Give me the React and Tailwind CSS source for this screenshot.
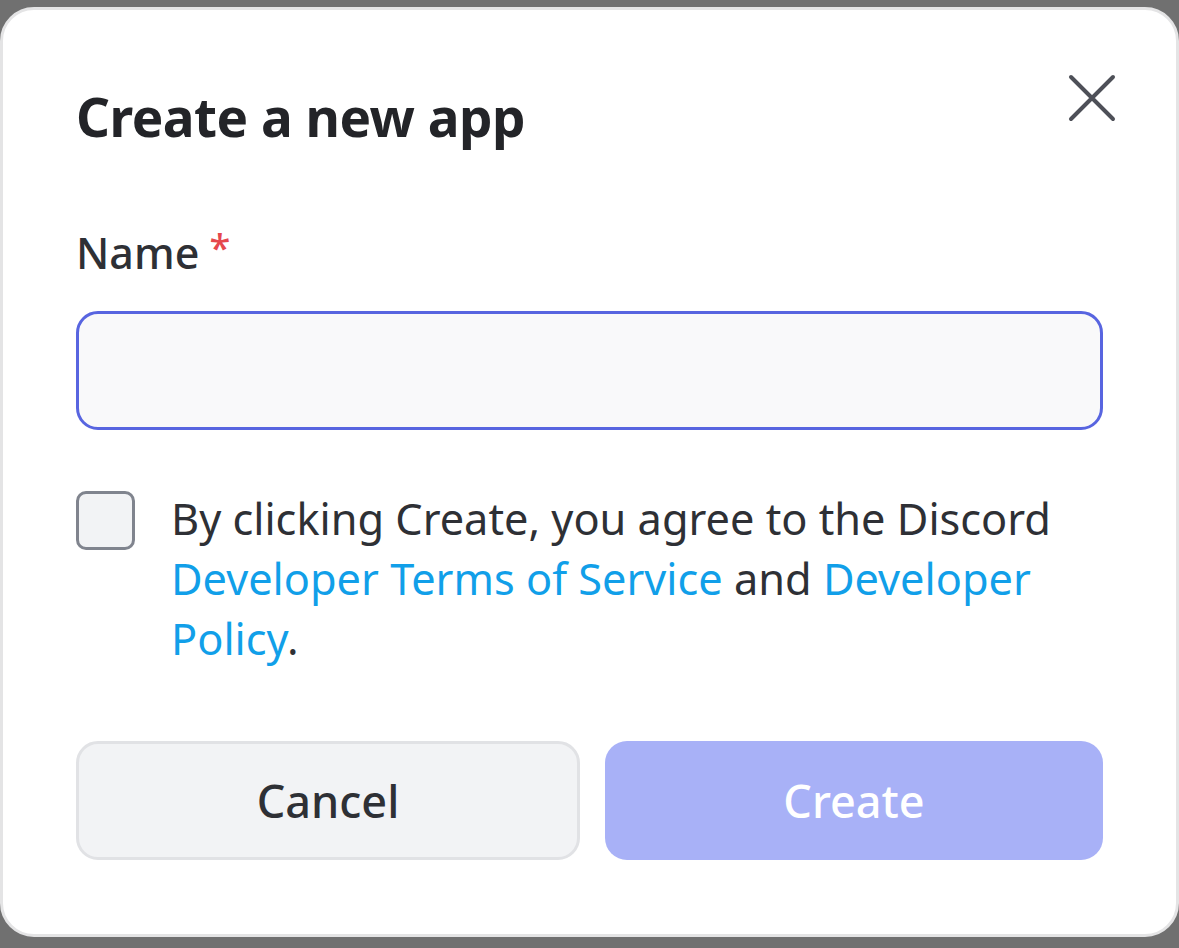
import React, { useState } from "react";

const font = { fontFamily: '"Noto Sans", "Open Sans", sans-serif' };

// Close icon drawn to match the thin rounded X
const CloseIcon = () => (
  <svg width="48" height="48" viewBox="0 0 48 48" fill="none">
    <path d="M3 3 L45 45 M45 3 L3 45" stroke="#4e5058" strokeWidth="4" strokeLinecap="round" />
  </svg>
);

const App = () => {
  const [name, setName] = useState("");
  const [agreed, setAgreed] = useState(false);

  return (
    <div className="w-[1179px] h-[948px] bg-[#707070] pt-[7px] overflow-hidden" style={font}>
      <div className="h-[930px] rounded-[34px] border-[3px] border-[#e4e4e5] bg-white pl-[73px] pr-[73px]">
        {/* Header */}
        <div className="flex items-start justify-between pt-[67px]">
          <h1 className="text-[53px] leading-[80px] font-bold text-[#232428] tracking-[-0.5px]">
            Create a new app
          </h1>
          <button className="mt-[-3px] mr-[-13px] p-0">
            <CloseIcon />
          </button>
        </div>

        {/* Name field */}
        <label className="block mt-[66px] text-[43px] leading-[60px] font-medium text-[#2e3035]">
          Name<span className="text-[#e5484d] text-[38px] align-top ml-[10px] relative top-[-6px]">*</span>
        </label>
        <input
          value={name}
          onChange={(e) => setName(e.target.value)}
          className="mt-[28px] block w-full h-[119px] rounded-[22px] border-[3px] border-[#5865e0] bg-[#f9f9fa] px-6 text-[44px] outline-none"
        />

        {/* Terms */}
        <div className="flex items-start mt-[61px]">
          <button
            onClick={() => setAgreed(!agreed)}
            className={`shrink-0 w-[59px] h-[59px] rounded-[10px] border-[3px] border-[#80848e] ${agreed ? "bg-[#5865f2]" : "bg-[#f2f3f5]"}`}
          />
          <p className="ml-[36px] text-[43.3px] leading-[60px] text-[#2e3035] mt-[-2px]">
            By clicking Create, you agree to the Discord
            <br />
            <a className="text-[#119fe9]">Developer Terms of Service</a> and{" "}
            <a className="text-[#119fe9]">Developer</a>
            <br />
            <a className="text-[#119fe9]">Policy</a>.
          </p>
        </div>

        {/* Actions */}
        <div className="flex gap-[25px] mt-[72px]">
          <button className="flex-1 h-[119px] rounded-[22px] border-[3px] border-[#e1e2e5] bg-[#f2f3f5] text-[45px] font-medium text-[#2e3035]">
            Cancel
          </button>
          <button className="flex-1 h-[119px] rounded-[22px] bg-[#a8b1f7] text-[45px] font-medium text-white">
            Create
          </button>
        </div>
      </div>
    </div>
  );
};

export default App;
